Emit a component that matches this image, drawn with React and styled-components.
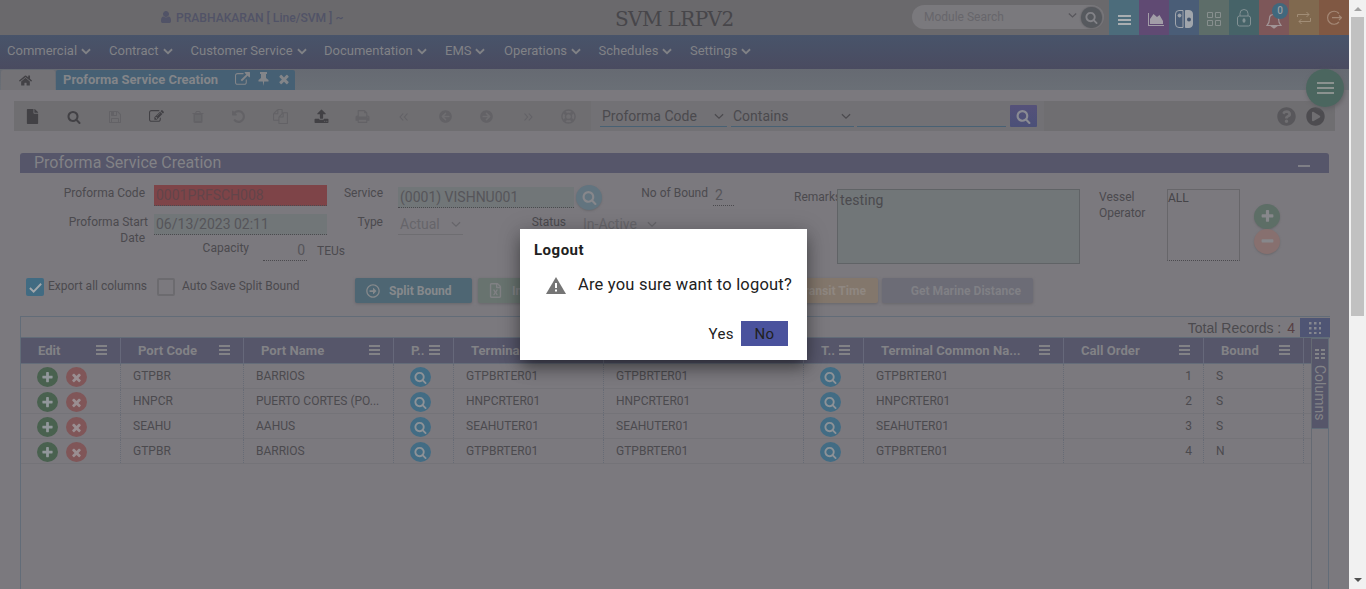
import React from "react";
import styled, { createGlobalStyle, css } from "styled-components";
import {
  FaFile, FaArrowCircleLeft, FaArrowCircleRight, FaRegLifeRing, FaHome,
  FaQuestionCircle, FaPlayCircle, FaRegFileExcel, FaRegArrowAltCircleRight,
} from "react-icons/fa";

const Global = createGlobalStyle`
  * { box-sizing: border-box; }
  html, body { margin: 0; padding: 0; overflow: hidden; background: #7b797e; }
  body { font-family: Roboto, "Liberation Sans", sans-serif; font-size: 12px; color: #4b4a4e; }
`;

const paths = {
  user: "M1536 1399q0 109-62.500 187t-150.500 78h-854q-88 0-150.500-78t-62.500-187q0-85 8.500-160.500t31.500-152 58.500-131 94-89 134.500-34.500q131 128 313 128t313-128q76 0 134.500 34.500t94 89 58.500 131 31.500 152 8.500 160.500zm-256-887q0 159-112.500 271.500t-271.500 112.500-271.500-112.500-112.500-271.500 112.500-271.500 271.500-112.500 271.500 112.500 112.500 271.500z",
  search: "M1216 832q0-185-131.500-316.500t-316.500-131.500-316.500 131.500-131.500 316.500 131.500 316.500 316.500 131.500 316.500-131.500 131.500-316.500zm512 832q0 52-38 90t-90 38q-54 0-90-38l-343-342q-179 124-399 124-143 0-273.500-55.500t-225-150-150-225-55.500-273.500 55.500-273.500 150-225 225-150 273.500-55.500 273.500 55.500 225 150 150 225 55.500 273.500q0 220-124 399l343 343q37 37 37 90z",
  plus: "M1600 736v192q0 40-28 68t-68 28h-416v416q0 40-28 68t-68 28h-192q-40 0-68-28t-28-68v-416h-416q-40 0-68-28t-28-68v-192q0-40 28-68t68-28h416v-416q0-40 28-68t68-28h192q40 0 68 28t28 68v416h416q40 0 68 28t28 68z",
  minus: "M1600 736v192q0 40-28 68t-68 28h-1216q-40 0-68-28t-28-68v-192q0-40 28-68t68-28h1216q40 0 68 28t28 68z",
  times: "M1490 1322q0 40-28 68l-136 136q-28 28-68 28t-68-28l-294-294-294 294q-28 28-68 28t-68-28l-136-136q-28-28-28-68t28-68l294-294-294-294q-28-28-28-68t28-68l136-136q28-28 68-28t68 28l294 294 294-294q28-28 68-28t68 28l136 136q28 28 28 68t-28 68l-294 294 294 294q28 28 28 68z",
  save: "M512 1536h768v-384h-768v384zm896 0h128v-896q0-14-10-38.500t-20-34.500l-281-281q-10-10-34-20t-39-10v416q0 40-28 68t-68 28h-576q-40 0-68-28t-28-68v-416h-128v1280h128v-416q0-40 28-68t68-28h832q40 0 68 28t28 68v416zm-384-928v-320q0-13-9.500-22.500t-22.500-9.500h-192q-13 0-22.500 9.500t-9.500 22.500v320q0 13 9.500 22.500t22.500 9.500h192q13 0 22.500-9.500t9.500-22.500zm640 32v928q0 40-28 68t-68 28h-1344q-40 0-68-28t-28-68v-1344q0-40 28-68t68-28h928q40 0 88 20t76 48l280 280q28 28 48 76t20 88z",
  edit: "M888 1184l116-116-152-152-116 116v56h96v96h56zm440-720q-16-16-33 1l-350 350q-17 17-1 33t33-1l350-350q17-17 1-33zm80 594v190q0 119-84.500 203.500t-203.500 84.500h-832q-119 0-203.500-84.500t-84.500-203.500v-832q0-119 84.500-203.500t203.500-84.500h832q63 0 117 25 15 7 18 23 3 17-9 29l-49 49q-14 14-32 8-23-6-45-6h-832q-66 0-113 47t-47 113v832q0 66 47 113t113 47h832q66 0 113-47t47-113v-126q0-13 9-22l64-64q15-15 35-7t20 29zm-96-738l288 288-672 672h-288v-288zm444 132l-92 92-288-288 92-92q28-28 68-28t68 28l152 152q28 28 28 68t-28 68z",
  trash: "M704 1376v-704q0-14-9-23t-23-9h-64q-14 0-23 9t-9 23v704q0 14 9 23t23 9h64q14 0 23-9t9-23zm256 0v-704q0-14-9-23t-23-9h-64q-14 0-23 9t-9 23v704q0 14 9 23t23 9h64q14 0 23-9t9-23zm256 0v-704q0-14-9-23t-23-9h-64q-14 0-23 9t-9 23v704q0 14 9 23t23 9h64q14 0 23-9t9-23zm-544-992h448l-48-117q-7-9-17-11h-317q-10 2-17 11zm928 32v64q0 14-9 23t-23 9h-96v948q0 83-47 143.500t-113 60.500h-832q-66 0-113-58.500t-47-141.500v-952h-96q-14 0-23-9t-9-23v-64q0-14 9-23t23-9h309l70-167q15-37 54-63t79-26h320q40 0 79 26t54 63l70 167h309q14 0 23 9t9 23z",
  undo: "M1664 896q0 156-61 298t-164 245-245 164-298 61q-172 0-327-72.500t-264-204.500q-7-10-6.500-22.500t8.500-20.500l137-138q10-9 25-9 16 2 23 12 73 95 179 147t225 52q104 0 198.500-40.500t163.500-109.500 109.500-163.500 40.500-198.500-40.500-198.500-109.500-163.500-163.500-109.500-198.500-40.500q-98 0-188 35.500t-160 101.500l137 138q31 30 14 69-17 40-59 40h-448q-26 0-45-19t-19-45v-448q0-42 40-59 39-17 69 14l130 129q107-101 244.500-156.500t284.500-55.500q156 0 298 61t245 164 164 245 61 298z",
  copy: "M1696 384q40 0 68 28t28 68v1216q0 40-28 68t-68 28h-960q-40 0-68-28t-28-68v-288h-544q-40 0-68-28t-28-68v-672q0-40 20-88t48-76l408-408q28-28 76-48t88-20h416q40 0 68 28t28 68v328q68-40 128-40h416zm-544 213l-299 299h299v-299zm-640-384l-299 299h299v-299zm196 647l316-316v-416h-384v416q0 40-28 68t-68 28h-416v640h512v-256q0-40 20-88t48-76zm956 804v-1152h-384v416q0 40-28 68t-68 28h-416v640h896z",
  upload: "M1344 1472q0-26-19-45t-45-19-45 19-19 45 19 45 45 19 45-19 19-45zm256 0q0-26-19-45t-45-19-45 19-19 45 19 45 45 19 45-19 19-45zm128-224v320q0 40-28 68t-68 28h-1472q-40 0-68-28t-28-68v-320q0-40 28-68t68-28h427q21 56 70.500 92t110.500 36h256q61 0 110.500-36t70.500-92h427q40 0 68 28t28 68zm-325-648q-17 40-59 40h-256v448q0 26-19 45t-45 19h-256q-26 0-45-19t-19-45v-448h-256q-42 0-59-40-17-39 14-69l448-448q18-19 45-19t45 19l448 448q31 30 14 69z",
  print: "M448 1536h896v-256h-896v256zm0-640h896v-384h-160q-40 0-68-28t-28-68v-160h-640v640zm1152 64q0-26-19-45t-45-19-45 19-19 45 19 45 45 19 45-19 19-45zm128 0v416q0 13-9.500 22.500t-22.500 9.500h-224v160q0 40-28 68t-68 28h-960q-40 0-68-28t-28-68v-160h-224q-13 0-22.500-9.500t-9.500-22.500v-416q0-79 56.500-135.500t135.500-56.500h64v-544q0-40 28-68t68-28h672q40 0 88 20t76 48l152 152q28 28 48 76t20 88v256h64q79 0 135.500 56.500t56.500 135.500z",
  external: "M1408 928v320q0 119-84.500 203.500t-203.500 84.500h-832q-119 0-203.500-84.500t-84.500-203.500v-832q0-119 84.500-203.500t203.500-84.500h704q14 0 23 9t9 23v64q0 14-9 23t-23 9h-704q-66 0-113 47t-47 113v832q0 66 47 113t113 47h832q66 0 113-47t47-113v-320q0-14 9-23t23-9h64q14 0 23 9t9 23zm384-864v512q0 26-19 45t-45 19-45-19l-176-176-652 652q-10 10-23 10t-23-10l-114-114q-10-10-10-23t10-23l652-652-176-176q-19-19-19-45t19-45 45-19h512q26 0 45 19t19 45z",
};

const Glyph = ({ name, size = 15 }) => (
  <svg width={size} height={size} viewBox="0 0 1792 1792" fill="currentColor"><path d={paths[name]} /></svg>
);
const Stroke = ({ d, w = 16, h = 16, sw = 1.5, box = "0 0 16 16" }) => (
  <svg width={w} height={h} viewBox={box} fill="none" stroke="currentColor" strokeWidth={sw}><path d={d} /></svg>
);
const Chevron = ({ w = 11, sw = 2 }) => <Stroke w={w} h={7} box="0 0 11 7" sw={sw} d="M1 1l4.500 4.300L10 1" />;
const Bars = ({ w = 11, h = 10, t = 2 }) => (
  <svg width={w} height={h} fill="currentColor" shapeRendering="crispEdges">
    <rect width={w} height={t} /><rect y={(h - t) / 2} width={w} height={t} /><rect y={h - t} width={w} height={t} />
  </svg>
);

const Screen = styled.div`position: relative; display: flex; width: 1366px; height: 589px; overflow: hidden;`;
const Page = styled.main`width: 1349px; height: 589px; display: flex; flex-direction: column; overflow: hidden; background: #7b797e;`;

const TopBar = styled.header`display: flex; height: 35px; flex: none; background: #6a696c;`;
const UserName = styled.div`
  display: flex; align-items: center; gap: 3px; width: 615px; padding-left: 159px;
  color: #515367; font-weight: 500; font-size: 12.100px;
  svg { margin-top: -1px; }
`;
const Brand = styled.div`width: 297px; color: #47464a; font: 20px/38px "DejaVu Serif", serif; white-space: nowrap; letter-spacing: -0.6px;`;
const ModuleSearch = styled.div`
  display: flex; align-items: center; width: 192px; height: 24px; margin: 5px 5px 0 0; padding-left: 12px;
  border-radius: 12px; background: #7a797d; color: #67666b;
  & > span { width: 144px; }
  & > svg { margin-top: -4px; color: #58575c; }
`;
const SearchDot = styled.div`
  display: grid; place-items: center; width: 21px; height: 21px; margin-left: 4px; border-radius: 50%;
  background: #56595e; color: #828287; box-shadow: 0 0 2px #4c4c50;
`;
const AppTile = styled.div`
  position: relative; display: grid; place-items: center; width: 30px; height: 35px;
  background: ${(p) => p.$bg}; color: ${(p) => p.$fg || "#8a8c8e"};
`;
const TileMark = styled.div`display: grid; padding: ${(p) => p.$pad};`;
const Count = styled.div`
  position: absolute; left: 13px; top: 3px; width: 16px; height: 16px; border-radius: 50%;
  background: #41687d; color: #9a9fa4; font: 500 10px/16px Roboto, sans-serif; text-align: center;
`;

const Nav = styled.nav`
  display: flex; align-items: center; height: 34px; flex: none; padding: 0 0 3px 7px;
  background: linear-gradient(#48546a, #4a4b60); color: #818286; font-size: 13px;
`;
const NavItem = styled.div`display: flex; align-items: center; gap: 4px; width: ${(p) => p.$w}px; svg { margin-top: 2px; }`;

const TabStrip = styled.div`display: flex; height: 21px; flex: none; padding: 1px 0 0 1px; background: linear-gradient(#666a72, #6a6f76);`;
const HomeTab = styled.div`
  display: grid; place-items: center; width: 54px; height: 20px; margin-right: 1px; padding-right: 6px;
  background: #737276; color: #434246; border-radius: 2px 2px 0 0;
`;
const ActiveTab = styled.div`
  display: flex; align-items: center; width: 239px; height: 20px; padding: 0 0 2px 7px; border-radius: 2px 2px 0 0;
  background: #466074; color: #838589; font-weight: 700; font-size: 13px;
  & > span { width: 172px; }
  svg + svg { margin-left: 7px; }
`;

const Toolbar = styled.div`display: flex; height: 30px; flex: none; margin: 11px 14px 0 14px; background: #6f6e71; font-size: 14px;`;
const ToolIcons = styled.div`display: flex; width: 577px; padding-right: 2px; margin-left: -2px; margin-right: 2px;`;
const Tool = styled.div`
  display: grid; place-items: center; width: 41.250px; flex: none; height: 31px;
  color: ${(p) => (p.$on ? "#424145" : "#636266")};
`;
const Query = styled.div`display: flex; width: 453px; padding: 3px 0 0 9px; background: #727175;`;
const Underlined = styled.div`
  display: flex; align-items: center; justify-content: space-between; width: ${(p) => p.$w}px; height: 23px;
  margin-right: ${(p) => p.$gap}px; padding: 2px 3px 0 2px; border-bottom: 1px solid #486174;
`;
const FindButton = styled.div`
  display: grid; place-items: center; width: 27px; height: 22px; margin-top: 1px; border-radius: 1px;
  background: linear-gradient(#555179, #4b5078); color: #8a8b93;
`;
const ToolEnd = styled.div`display: flex; align-items: center; gap: 10px; margin-left: 233px; font-size: 19px; color: #58575b; svg + svg { color: #4d4c50; }`;

const PanelTitle = styled.div`
  display: flex; justify-content: space-between; height: 20px; flex: none; margin: 22px 20px 0; padding: 0 19px 0 14px;
  background: #56566a; color: #828286; border-radius: 3px 3px 0 0; font-size: 16px; line-height: 20px;
`;
const Collapse = styled.i`width: 12px; height: 2px; margin-top: 12px; background: #7f7f86;`;

const Form = styled.section`display: flex; height: 105px; flex: none; padding-left: 20px;`;
const Column = styled.div`width: ${(p) => p.$w}px; flex: none;`;
const Row = styled.div`display: flex; align-items: flex-start; height: ${(p) => p.$h}px; padding-top: ${(p) => p.$pt || 0}px;`;
const Label = styled.label`
  width: ${(p) => p.$w}px; flex: none; line-height: 16px; text-align: ${(p) => p.$align || "right"};
  padding-right: ${(p) => p.$pr || 0}px; padding-left: ${(p) => p.$pl || 0}px; margin-top: ${(p) => p.$mt || 0}px;
  margin-left: ${(p) => p.$ml || 0}px; white-space: ${(p) => (p.$wrap ? "normal" : "nowrap")};
`;
const Indent = styled.span`padding-right: 3px;`;
const Field = styled.div`
  display: flex; justify-content: ${(p) => (p.$end ? "flex-end" : "flex-start")}; width: ${(p) => p.$w}px; height: 21px; flex: none; padding: 0 2px;
  margin: ${(p) => p.$mt || 0}px ${(p) => p.$mr || 0}px 0 ${(p) => p.$ml || 0}px;
  font-size: 14px; line-height: 21px; color: #56555a; border-bottom: 1px dotted #4b4a4e;
  ${(p) => p.$tint && css`background: #717678;`}
  ${(p) => p.$error && css`background: #7e4448; color: #62454a;`}
`;
const Select = styled.div`
  display: flex; align-items: center; justify-content: space-between; width: ${(p) => p.$w}px; height: 21px; flex: none;
  margin-left: 15px; padding: 0 2px; font-size: 14px; color: #66656a; border-bottom: 1px solid #6e6d71;
`;
const Round = styled.div`
  display: grid; place-items: center; width: ${(p) => p.$s}px; height: ${(p) => p.$s - 1}px; flex: none; border-radius: 50%;
  background: ${(p) => p.$bg}; color: ${(p) => p.$fg || "#87878b"};
  box-shadow: ${(p) => (p.$flat ? "none" : "0 1px 2px #6a696d")};
`;
const Remarks = styled.div`
  position: relative; width: 243px; height: 75px; margin-top: 16px; padding: 2px; border: 1px solid #606366; background: #717678;
  font-size: 14px; line-height: 17px; letter-spacing: .1px;
`;
const Operators = styled.div`
  width: 73px; height: 72px; margin-top: 16px; border: 1px solid #67666a; border-bottom: 1px dotted #4b4a4e; line-height: 17px; color: #454448;
`;
const RoundStack = styled.div`display: flex; flex-direction: column; padding: 31px 0 0 14px;`;

const Actions = styled.div`display: flex; height: 38px; flex: none; padding-left: 26px;`;
const Check = styled.div`
  display: grid; place-items: center; width: 18px; height: 18px; border-radius: 2px; color: #a2a7ab;
  ${(p) => (p.$on ? css`background: #416b82;` : css`border: 2px solid #6c6b6f;`)}
`;
const CheckText = styled.div`width: ${(p) => p.$w}px; margin-left: ${(p) => p.$ml}px; line-height: 16px;`;
const Button = styled.div`
  display: flex; align-items: center; justify-content: ${(p) => p.$justify || "flex-start"}; gap: 9px; width: ${(p) => p.$w}px; height: 25px;
  flex: none; margin-right: ${(p) => p.$mr || 0}px; padding: 0 ${(p) => p.$px || 12}px; border-radius: 2px; background: ${(p) => p.$bg}; color: ${(p) => p.$fg};
  font-weight: 700; box-shadow: 0 1px 3px #68676b; font-size: 12.100px; white-space: nowrap;
  svg { flex: none; font-size: ${(p) => p.$icon || 14}px; }
`;

const Grid = styled.section`
  display: flex; flex-direction: column; width: 1310px; flex: 1; margin-left: 20px; border: 1px solid #626c78; border-right: 0; border-bottom: 0;
`;
const Summary = styled.div`
  display: flex; justify-content: flex-end; align-items: center; height: 20px; flex: none; padding-top: 1px; font: 14px "Liberation Sans", sans-serif;
  & > b { font-weight: 400; color: #573f43; margin: 0 5px 0 6px; }
`;
const GridTile = styled.div`display: grid; place-items: center; width: 30px; height: 20px; background: #4f5574; color: #85878f;`;
const GridBody = styled.div`display: flex; flex: 1; border-top: 1px solid #626c78;`;
const Table = styled.div`width: 1290px; overflow: hidden;`;
const HeadRow = styled.div`display: flex; height: 26px; background: #56566a; border-bottom: 1px solid #646c79;`;
const HeadCell = styled.div`
  display: flex; align-items: center; justify-content: space-between; width: ${(p) => p.$w}px; flex: none; padding: 0 13px 1px 17px;
  border-right: 1px solid #66687a; color: #828286; font-weight: 700; font-size: 13.100px; white-space: nowrap;
`;
const DataRow = styled.div`display: flex; height: 25px; border-bottom: 1px solid #747378;`;
const Cell = styled.div`
  display: flex; width: ${(p) => p.$w}px; flex: none; padding: 0 ${(p) => (p.$end ? 11 : 12)}px 0 12px; justify-content: ${(p) => (p.$end ? "flex-end" : "flex-start")};
  border-right: 1px dotted #676b75; line-height: 24px; white-space: nowrap;
`;
const IconCell = styled(Cell)`gap: 8px; padding: 3px 16px 0; overflow: hidden;`;
const Side = styled.aside`width: 18px; border-right: 1px solid #626c78; border-left: 1px solid #656a73;`;
const SideTab = styled.div`
  display: flex; flex-direction: column; align-items: center; width: 16px; height: 91px; padding-top: 10px; gap: 6px; background: #56566a;
  border-top: 1px solid #626c78; border-bottom: 1px solid #626c78; color: #828387;
  & > span { writing-mode: vertical-rl; font-size: 14px; line-height: 14px; }
`;

const Scroll = styled.div`
  display: flex; flex-direction: column; align-items: center; width: 17px; height: 589px; padding: 7px 0; background: #f1f1f1;
`;
const Arrow = styled.i`border: 4px solid transparent; border-top-width: 0; border-bottom: 4px solid #a3a3a3; ${(p) => p.$down && css`border-width: 4px 4px 0; border-color: #505050 transparent transparent; margin-top: auto;`}`;
const Thumb = styled.div`width: 13px; height: 299px; margin-top: 6px; background: #c1c1c1;`;

const MenuFab = styled.div`
  position: absolute; left: 1306px; top: 69px; display: grid; place-items: center; width: 38px; height: 38px; border-radius: 50%;
  background: #4b665f; color: #8b928f; box-shadow: 1px 2px 4px #626165;
`;
const Dialog = styled.div`
  position: absolute; left: 520px; top: 229px; width: 287px; height: 131px; padding: 12px 19px 14px 14px; background: #fff; color: #212121;
  box-shadow: 0 9px 15px -2px rgba(0,0,0,.4), 0 3px 20px 2px rgba(0,0,0,.18); display: flex; flex-direction: column;
`;
const DialogTitle = styled.div`font-size: 15px; line-height: 18px; font-weight: 700; letter-spacing: .5px;`;
const Message = styled.div`
  display: flex; align-items: center; gap: 12px; margin: 15px 0 0 12px; font-size: 16.500px; line-height: 22px; letter-spacing: .2px; white-space: nowrap;
  svg { flex: none; }
`;
const Choices = styled.div`display: flex; justify-content: flex-end; margin-top: auto; font-size: 15px; line-height: 26px; height: 25px; letter-spacing: .4px;`;
const No = styled.div`width: 47px; margin-left: 7px; background: #4a529d; text-align: center;`;

const nav = [["Commercial", 102], ["Contract", 81.5], ["Customer Service", 133.5], ["Documentation", 121], ["EMS", 59], ["Operations", 94.5], ["Schedules", 91.5], ["Settings", 80]];
const columns = [["Edit", 100], ["Port Code", 123], ["Port Name", 150], ["P..", 60], ["Terminal", 150], ["Terminal Name", 200], ["T..", 60], ["Terminal Common Na...", 200], ["Call Order", 140], ["Bound", 100]];
const rows = [["GTPBR", "BARRIOS", 1, "S"], ["HNPCR", "PUERTO CORTES (PO...", 2, "S"], ["SEAHU", "AAHUS", 3, "S"], ["GTPBR", "BARRIOS", 4, "N"]];

const Lookup = () => <Round $flat $s={21} $bg="#426c84" $fg="#8d9297"><Glyph name="search" size={13} /></Round>;

export default function App() {
  return (
    <Screen>
      <Global />
      <Page>
        <TopBar>
          <UserName><Glyph name="user" size={14} />PRABHAKARAN [ Line/SVM ] ~</UserName>
          <Brand>SVM LRPV2</Brand>
          <ModuleSearch><span>Module Search</span><Chevron w={9} sw={1.500} /><SearchDot><Glyph name="search" size={13} /></SearchDot></ModuleSearch>
          <AppTile $bg="#4c6c7b" $fg="#a9aeb1"><TileMark $pad="5px 0 0"><Bars w={13} h={10} /></TileMark></AppTile>
          <AppTile $bg="#604a73" $fg="#a29da7">
            <TileMark $pad="3px 0 0 4px"><svg width="16" height="13" fill="currentColor" viewBox="0 0 16 13"><path d="M0 0h1v12h15v1H0z" /><path d="M2 11V6l3.500-5L9 4l2.500-2L15 8v3z" /></svg></TileMark>
          </AppTile>
          <AppTile $bg="#4a5d77" $fg="#a0a5ac">
            <TileMark $pad="3px 0 0">
              <svg width="18" height="18" viewBox="0 0 18 18" fill="none" stroke="currentColor"><path d="M8 .5v17H4a3.500 3.500 0 0 1-3.500-3.500V4A3.500 3.500 0 0 1 4 .500z" /><circle cx="4.500" cy="5.500" r="1.500" fill="currentColor" /><path fill="currentColor" d="M10.500.5H14A3.500 3.500 0 0 1 17.500 4v10a3.500 3.500 0 0 1-3.500 3.500h-3.500z" /><circle cx="14" cy="9.500" r="2" fill="#43546d" stroke="none" /></svg>
            </TileMark>
          </AppTile>
          <AppTile $bg="#5d6d69" $fg="#878f8e"><TileMark $pad="2px 0 0"><Stroke d="M1.500 1.500h5v5h-5zM9.500 1.500h5v5h-5zM1.500 9.500h5v5h-5zM9.500 9.500h5v5h-5z" sw={1} /></TileMark></AppTile>
          <AppTile $bg="#466368" $fg="#829194">
            <svg width="14" height="18" viewBox="0 0 14 18" fill="none" stroke="currentColor"><rect x=".5" y="7" width="13" height="10" rx="2" /><path d="M3 7V4.500a4 4 0 0 1 8 0V7" /><ellipse cx="7" cy="11.500" rx="1.500" ry="2.200" fill="currentColor" stroke="none" /></svg>
          </AppTile>
          <AppTile $bg="#7d5759" $fg="#a19496">
            <TileMark $pad="5px 1px 0 0"><svg width="16" height="17" viewBox="0 0 16 17" fill="none" stroke="currentColor" strokeWidth="1.200"><path d="M1 13.500c2-2 2.500-3.500 2.500-7C3.500 4 5 2.500 8 2.500s4.500 1.500 4.500 4c0 3.500.5 5 2.500 7z" /><path d="M6 14.500h4L8 16z" fill="currentColor" /></svg></TileMark>
            <Count>0</Count>
          </AppTile>
          <AppTile $bg="#80694f" $fg="#a18d76"><Stroke d="M1.500 7V4.500H13M10.500 2L13 4.500 10.500 7M14.500 8v3.500H3M5.500 9L3 11.500 5.500 14" sw={1} /></AppTile>
          <AppTile $bg="#805843" $fg="#a38775"><Stroke d="M13 3.500A6.500 6.500 0 1 0 13 12M6 7.700h9.500M13 5.500l2.500 2.200L13 10" sw={1.200} /></AppTile>
        </TopBar>

        <Nav>{nav.map(([t, w]) => <NavItem key={t} $w={w}>{t}<Chevron w={10} /></NavItem>)}</Nav>

        <TabStrip>
          <HomeTab><FaHome size={13} /></HomeTab>
          <ActiveTab>
            <span>Proforma Service Creation</span><Glyph name="external" size={15} />
            <svg width="13" height="14" viewBox="0 0 13 14" fill="currentColor"><path d="M3 0h7v2H9v4l2.500 2v1.500H7.200L6.500 14l-.7-4.500H1.500V8L4 6V2H3z" /></svg>
            <Glyph name="times" size={14} />
          </ActiveTab>
        </TabStrip>

        <Toolbar>
          <ToolIcons>
            <Tool $on><FaFile size={15} /></Tool>
            <Tool $on><Glyph name="search" size={14} /></Tool>
            <Tool><Glyph name="save" size={14} /></Tool>
            <Tool $on><Glyph name="edit" size={15} /></Tool>
            <Tool><Glyph name="trash" size={14} /></Tool>
            <Tool><Glyph name="undo" size={15} /></Tool>
            <Tool><Glyph name="copy" size={15} /></Tool>
            <Tool $on><Glyph name="upload" size={15} /></Tool>
            <Tool><Glyph name="print" size={15} /></Tool>
            <Tool><Stroke d="M7 4L3.500 8 7 12M12 4L8.500 8 12 12" sw={1.300} w={14} h={14} /></Tool>
            <Tool><FaArrowCircleLeft size={13} /></Tool>
            <Tool><FaArrowCircleRight size={13} /></Tool>
            <Tool><Stroke d="M4 4l3.500 4L4 12M9 4l3.500 4L9 12" sw={1.300} w={14} h={14} /></Tool>
            <Tool><FaRegLifeRing size={15} /></Tool>
          </ToolIcons>
          <Query>
            <Underlined $w={127} $gap={4}>Proforma Code<Chevron w={10} sw={1.300} /></Underlined>
            <Underlined $w={123} $gap={3}>Contains<Chevron w={10} sw={1.300} /></Underlined>
            <Underlined $w={149} $gap={4} />
            <FindButton><Glyph name="search" size={15} /></FindButton>
          </Query>
          <ToolEnd><FaQuestionCircle /><FaPlayCircle /></ToolEnd>
        </Toolbar>

        <PanelTitle>Proforma Service Creation<Collapse /></PanelTitle>

        <Form>
          <Column $w={308}>
            <Row $h={41} $pt={12}><Label $w={134} $pr={9}>Proforma Code</Label><Field $w={173} $error>0001PRFSCH008</Field></Row>
            <Row $h={26}><Label $w={134} $pr={6} $wrap>Proforma Start <br /><Indent>Date</Indent></Label><Field $w={173} $tint>06/13/2023 02:11</Field></Row>
            <Row $h={22}><Label $w={229}>Capacity</Label><Field $w={44} $ml={14} $end>0</Field><Label $w={40} $mt={3} $ml={10} $align="left">TEUs</Label></Row>
          </Column>
          <Column $w={466}>
            <Row $h={41} $pt={12}>
              <Label $w={55}>Service</Label><Field $w={176} $tint $mt={2} $mr={2} $ml={15}>(0001) VISHNU001</Field>
              <Round $s={26} $bg="#62747f"><Glyph name="search" size={15} /></Round>
              <Label $w={106}>No of Bound</Label><Field $w={21} $ml={5}>2</Field>
            </Row>
            <Row $h={26}>
              <Label $w={55}>Type</Label><Select $w={65}>Actual<Chevron w={10} sw={1.300} /></Select>
              <Label $w={103}>Status</Label><Select $w={78}>In-Active<Chevron w={10} sw={1.300} /></Select>
            </Row>
          </Column>
          <Label $w={43} $mt={16} $align="left">Remarks</Label>
          <Remarks>testing</Remarks>
          <Label $w={87} $mt={16} $pl={19} $align="left" $wrap>Vessel Operator</Label>
          <Operators>ALL</Operators>
          <RoundStack>
            <Round $s={26} $bg="#5d6e66"><Glyph name="plus" size={15} /></Round>
            <Round $s={26} $bg="#87706f"><Glyph name="minus" size={15} /></Round>
          </RoundStack>
        </Form>

        <Actions>
          <Check $on><Stroke d="M2 8.500l4 4L14 4" sw={2} w={15} h={15} /></Check><CheckText $ml={4} $w={109}>Export all columns</CheckText>
          <Check /><CheckText $ml={7} $w={173}>Auto Save Split Bound</CheckText>
          <Button $w={117} $mr={6} $px={11} $bg="#4e6673" $fg="#86898c"><FaRegArrowAltCircleRight />Split Bound</Button>
          <Button $w={150} $mr={6} $px={10} $icon={15} $bg="#68736f" $fg="#808184"><FaRegFileExcel />Import Excel</Button>
          <Button $w={244} $mr={4} $bg="#83776c" $fg="#8f8781" $justify="flex-end">Transit Time</Button>
          <Button $w={151} $bg="#6c6c76" $fg="#808085" $justify="flex-end">Get Marine Distance</Button>
        </Actions>

        <Grid>
          <Summary>
            Total Records :<b>4</b>
            <GridTile><svg width="12" height="12" fill="currentColor">{[0, 5, 10].map((y) => [0, 5, 10].map((x) => <rect key={`${x}-${y}`} x={x} y={y} width="2.500" height="2.500" />))}</svg></GridTile>
          </Summary>
          <GridBody>
            <Table>
              <HeadRow>{columns.map(([t, w]) => <HeadCell key={t} $w={w}>{t}<Bars /></HeadCell>)}</HeadRow>
              {rows.map(([code, name, n, bound]) => (
                <DataRow key={n}>
                  <IconCell $w={100}>
                    <Round $flat $s={21} $bg="#49614f" $fg="#92979b"><Glyph name="plus" size={13} /></Round>
                    <Round $flat $s={21} $bg="#805658" $fg="#9a8e91"><Glyph name="times" size={13} /></Round>
                  </IconCell>
                  <Cell $w={123}>{code}</Cell>
                  <Cell $w={150}>{name}</Cell>
                  <IconCell $w={60}><Lookup /></IconCell>
                  <Cell $w={150}>{code}TER01</Cell>
                  <Cell $w={200}>{code}TER01</Cell>
                  <IconCell $w={60}><Lookup /></IconCell>
                  <Cell $w={200}>{code}TER01</Cell>
                  <Cell $w={140} $end>{n}</Cell>
                  <Cell $w={100}>{bound}</Cell>
                </DataRow>
              ))}
            </Table>
            <Side>
              <SideTab>
                <svg width="10" height="10" fill="currentColor" shapeRendering="crispEdges">{[0, 4, 8].map((y) => <path key={y} d={`M0 ${y}h4v2h-4zM6 ${y}h4v2h-4z`} />)}</svg>
                <span>Columns</span>
              </SideTab>
            </Side>
          </GridBody>
        </Grid>
      </Page>

      <Scroll><Arrow /><Thumb /><Arrow $down /></Scroll>
      <MenuFab><Bars w={17} h={12} /></MenuFab>

      <Dialog>
        <DialogTitle>Logout</DialogTitle>
        <Message>
          <svg width="20" height="17" viewBox="0 0 20 17"><path d="M10 0l10 17H0z" fill="#757575" /><path d="M9 6h2v5H9zM9 12.500h2v2H9z" fill="#fff" /></svg>
          Are you sure want to logout?
        </Message>
        <Choices>Yes<No>No</No></Choices>
      </Dialog>
    </Screen>
  );
}
